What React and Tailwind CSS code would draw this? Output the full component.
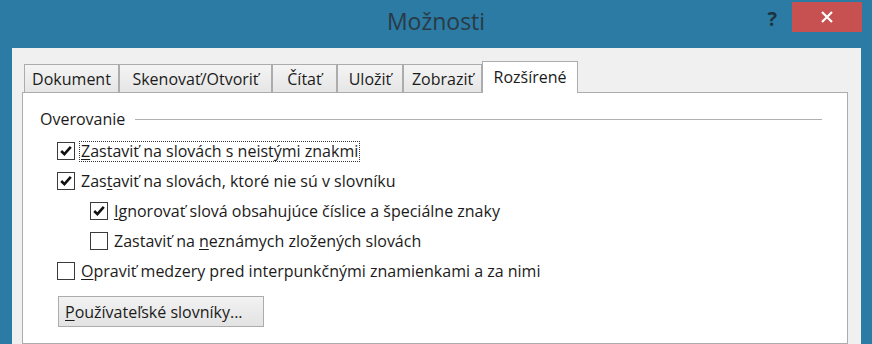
import React from "react";

const font = { fontFamily: '"Segoe UI", "Open Sans", "Noto Sans", sans-serif' };

const tabs = [
  { label: "Dokument", w: "w-[95px]" },
  { label: "Skenovať/Otvoriť", w: "w-[153px]" },
  { label: "Čítať", w: "w-[65px]" },
  { label: "Uložiť", w: "w-[66px]" },
  { label: "Zobraziť", w: "w-[79px]" },
];

const Check = ({ checked }) => (
  <span className="w-[18px] h-[18px] shrink-0 border border-[#3a3a3a] bg-white flex items-center justify-center">
    {checked && (
      <svg width="14" height="14" viewBox="0 0 14 14">
        <path d="M2.2 7 L5.4 10.2 L11.8 2.8" fill="none" stroke="#111" strokeWidth="2.6" />
      </svg>
    )}
  </span>
);

// label text with one underlined access key
const Label = ({ pre, key_, post }) => (
  <span>
    {pre}
    <span className="underline underline-offset-2">{key_}</span>
    {post}
  </span>
);

const Row = ({ checked, indent, focus, children }) => (
  <div className={`h-[30px] flex items-center ${indent ? "pl-[67px]" : "pl-[34px]"}`}>
    <Check checked={checked} />
    <div
      className={`ml-[5px] px-px leading-[19px] ${
        focus ? "outline outline-1 outline-dotted outline-[#333]" : ""
      }`}
    >
      {children}
    </div>
  </div>
);

export default function App() {
  return (
    <div className="w-[872px] h-[344px] overflow-hidden bg-[#2b7ba5] flex flex-col text-[16px] text-[#1b1b1b]" style={font}>
      {/* title bar */}
      <div className="h-[48px] shrink-0 grid grid-cols-[1fr_auto_1fr]">
        <div />
        <div className="pt-[4px] text-[23px] text-[#2a3a44] leading-[34px]">Možnosti</div>
        <div className="flex justify-end items-start pr-[10px] pt-[2px]">
          <span className="mt-[6px] mr-[15px] text-[20px] font-bold text-[#1d3340] leading-[22px]">?</span>
          <div className="w-[70px] h-[30px] bg-[#c75050] flex items-center justify-center">
            <svg width="12" height="12" viewBox="0 0 12 12">
              <path d="M1 1 L11 11 M11 1 L1 11" stroke="#fff" strokeWidth="2.2" />
            </svg>
          </div>
        </div>
      </div>

      {/* dialog body */}
      <div className="flex-1 ml-[12px] mr-[11px] bg-[#f0f0f0] pl-[10px] pr-[13px] pt-[12px] flex flex-col">
        <div className="flex items-end pl-[2px] h-[32px] relative z-10">
          {tabs.map((t) => (
            <div
              key={t.label}
              className={`${t.w} h-[28px] border border-b-0 border-[#acacac] bg-gradient-to-b from-[#f4f4f4] to-[#e6e6e6] flex items-center justify-center leading-none`}
            >
              {t.label}
            </div>
          ))}
          <div className="w-[96px] h-[32px] -mb-px border border-b-0 border-[#acacac] bg-white flex items-center justify-center pb-[2px]">
            Rozšírené
          </div>
        </div>

        <div className="flex-1 bg-white border border-[#acacac] pt-[16px]">
          <div className="h-[20px] flex items-center pl-[17px] pr-[25px]">
            <span>Overovanie</span>
            <div className="flex-1 ml-[10px] h-px bg-[#b0b0b0]" />
          </div>

          <div className="mt-[7px]">
            <Row checked focus>
              <Label pre="" key_="Z" post="astaviť na slovách s neistými znakmi" />
            </Row>
            <Row checked>
              <Label pre="Zas" key_="t" post="aviť na slovách, ktoré nie sú v slovníku" />
            </Row>
            <Row checked indent>
              <Label pre="" key_="I" post="gnorovať slová obsahujúce číslice a špeciálne znaky" />
            </Row>
            <Row indent>
              <Label pre="Zastaviť na " key_="n" post="eznámych zložených slovách" />
            </Row>
            <Row>
              <Label pre="" key_="O" post="praviť medzery pred interpunkčnými znamienkami a za nimi" />
            </Row>
          </div>

          <div className="pl-[35px] mt-[10px]">
            <button className="w-[206px] h-[31px] border border-[#acacac] bg-gradient-to-b from-[#f2f2f2] to-[#e3e3e3] text-left pl-[6px]">
              <Label pre="" key_="P" post="oužívateľské slovníky..." />
            </button>
          </div>
        </div>
      </div>
    </div>
  );
}
